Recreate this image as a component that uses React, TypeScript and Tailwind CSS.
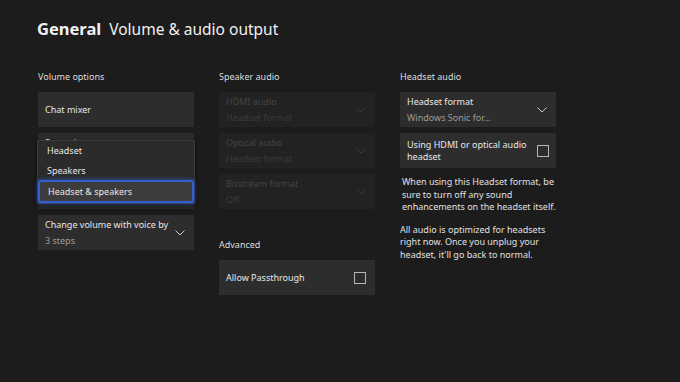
import React from "react";

const font = { fontFamily: '"Noto Sans", "Liberation Sans", sans-serif' };

function Chevron({ dim }: { dim?: boolean }) {
  return (
    <svg
      width="10"
      height="6"
      viewBox="0 0 10 6"
      fill="none"
      stroke="currentColor"
      strokeWidth="1"
      className={dim ? "text-[#3a3a3a]" : "text-[#c8c8c8]"}
    >
      <path d="M0.5 0.5 L5 5 L9.5 0.5" />
    </svg>
  );
}

function Checkbox() {
  return <span className="block w-[12px] h-[12px] border border-[#b5b5b5]" />;
}

function Card({
  label,
  value,
  dim,
  chevron,
  checkbox,
}: {
  label: string;
  value?: string;
  dim?: boolean;
  chevron?: boolean;
  checkbox?: boolean;
}) {
  return (
    <div
      className={`h-[35px] flex items-center justify-between pl-[7px] pr-[9px] ${
        dim ? "bg-[#222222]" : "bg-[#2d2d2d]"
      }`}
    >
      <div className="flex flex-col min-w-0">
        <span
          className={`text-[9px] leading-[16px] ${
            dim ? "text-[#454545]" : "text-[#e8e8e8]"
          }`}
        >
          {label}
        </span>
        {value ? (
          <span
            className={`text-[9px] leading-[16px] truncate ${
              dim ? "text-[#3c3c3c]" : "text-[#9c9c9c]"
            }`}
          >
            {value}
          </span>
        ) : null}
      </div>
      {chevron ? <Chevron dim={dim} /> : null}
      {checkbox ? <Checkbox /> : null}
    </div>
  );
}

function Label({ children }: { children: React.ReactNode }) {
  return (
    <div className="text-[9px] leading-[14px] text-[#dcdcdc] mb-[8px]">
      {children}
    </div>
  );
}

export default function App() {
  return (
    <main
      className="w-[680px] h-[382px] bg-[#1c1c1c] text-white pl-[37px] pt-[17px] overflow-hidden"
      style={font}
    >
      {/* Header */}
      <h1 className="text-[15.5px] leading-[24px] text-[#f0f0f0] flex items-baseline gap-[8px]">
        <span className="font-bold text-[16.5px]">General</span>
        <span>Volume &amp; audio output</span>
      </h1>

      <section className="mt-[29px] ml-[1px] grid grid-cols-[156px_156px_156px] gap-x-[25px]">
        {/* Volume options */}
        <div>
          <Label>Volume options</Label>
          <div className="flex flex-col gap-[6px] relative">
            <Card label="Chat mixer" />
            <Card label="Party chat output" value="Headset & speakers" chevron />
            <Card label="" />
            <Card label="Change volume with voice by" value="3 steps" chevron />

            {/* Open dropdown */}
            <div className="absolute left-[-1px] top-[48px] w-[158px] bg-[#2b2b2b] border border-[#3a3a3a] shadow-[0_2px_6px_rgba(0,0,0,0.5)] flex flex-col">
              <div className="h-[20px] flex items-center pl-[9px] text-[9px] text-[#e8e8e8]">
                Headset
              </div>
              <div className="h-[19px] flex items-center pl-[9px] text-[9px] text-[#e8e8e8]">
                Speakers
              </div>
              <div className="h-[23px] flex items-center pl-[8px] text-[9px] text-[#e8e8e8] bg-[#3c3c3c] border-2 border-[#2f5fd0] rounded-[3px] shadow-[0_0_4px_rgba(50,110,240,0.7)]">
                Headset &amp; speakers
              </div>
            </div>
          </div>
        </div>

        {/* Speaker audio */}
        <div>
          <Label>Speaker audio</Label>
          <div className="flex flex-col gap-[6px]">
            <Card label="HDMI audio" value="Headset format" dim chevron />
            <Card label="Optical audio" value="Headset format" dim chevron />
            <Card label="Bitstream format" value="Off" dim chevron />
          </div>

          <div className="mt-[29px]">
            <Label>Advanced</Label>
            <Card label="Allow Passthrough" checkbox />
          </div>
        </div>

        {/* Headset audio */}
        <div>
          <Label>Headset audio</Label>
          <div className="flex flex-col gap-[6px]">
            <Card label="Headset format" value="Windows Sonic for..." chevron />
            <div className="h-[35px] flex items-center justify-between pl-[7px] pr-[7px] bg-[#2d2d2d]">
              <span className="text-[9px] leading-[12px] text-[#e8e8e8]">
                Using HDMI or optical audio
                <br />
                headset
              </span>
              <Checkbox />
            </div>
          </div>
          <p className="mt-[8px] pl-[2px] text-[9px] leading-[12.5px] text-[#e0e0e0]">
            When using this Headset format, be
            <br />
            sure to turn off any sound
            <br />
            enhancements on the headset itself.
          </p>
          <p className="mt-[10px] text-[9px] leading-[12.5px] text-[#e0e0e0]">
            All audio is optimized for headsets
            <br />
            right now. Once you unplug your
            <br />
            headset, it'll go back to normal.
          </p>
        </div>
      </section>
    </main>
  );
}
